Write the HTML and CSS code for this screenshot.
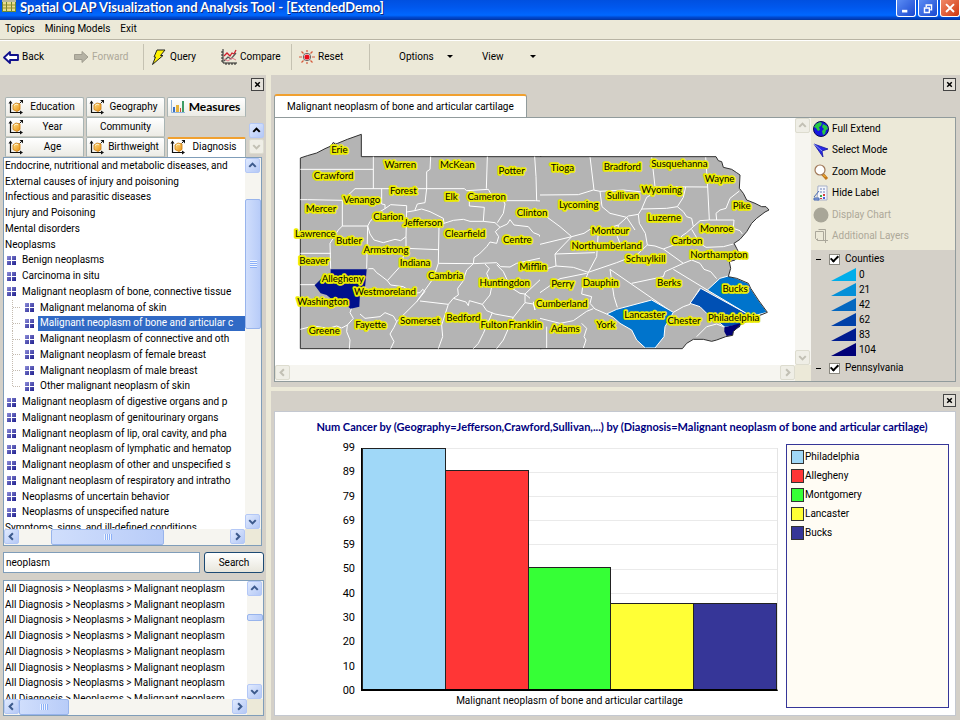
FILE: index.html
```html
<!DOCTYPE html>
<html lang="en">
<head>
<meta charset="utf-8">
<title>Spatial OLAP Visualization and Analysis Tool</title>
<link rel="stylesheet" href="styles.css">
</head>
<body>
<svg class="defs" width="0" height="0" aria-hidden="true">
  <defs>
    <linearGradient id="cubeFace" x1="0" y1="0" x2="1" y2="1"><stop offset="0" stop-color="#ffe08a"/><stop offset="1" stop-color="#e88f10"/></linearGradient>
    <symbol id="i-cube" viewBox="0 0 16 16">
      <path d="M2.500 3v10.500H13" fill="none" stroke="#111" stroke-width="1.200"/>
      <path d="M.5 4.500l2-3 2 3zM12 11.500l3 2-3 2zM11.500 1H15v3.500z" fill="#111"/>
      <path d="M11.500 4.500l2-2" stroke="#111"/>
      <path d="M5 6l3-2 4 1v5.500l-3 2-4-2z" fill="url(#cubeFace)" stroke="#c9780c" stroke-width=".8"/>
      <path d="M6 6.500l2-1.300 2 .6" fill="none" stroke="#fff3c8"/>
    </symbol>
    <symbol id="i-up" viewBox="0 0 14 14"><path d="M3.500 8.500L7 5l3.500 3.500" fill="none" stroke="currentColor" stroke-width="2.200"/></symbol>
    <symbol id="i-down" viewBox="0 0 14 14"><path d="M3.500 5.500L7 9l3.500-3.500" fill="none" stroke="currentColor" stroke-width="2.200"/></symbol>
    <symbol id="i-left" viewBox="0 0 14 14"><path d="M8.500 3.500L5 7l3.500 3.500" fill="none" stroke="currentColor" stroke-width="2.200"/></symbol>
    <symbol id="i-right" viewBox="0 0 14 14"><path d="M5.500 3.500L9 7l-3.500 3.500" fill="none" stroke="currentColor" stroke-width="2.200"/></symbol>
    <symbol id="i-x" viewBox="0 0 12 12"><path d="M3.500 3.500l5 5M8.500 3.500l-5 5" stroke="#000" stroke-width="1.600"/></symbol>
  </defs>
</svg>
<div class="app">
  <header class="titlebar">
    <svg class="app-icon" viewBox="0 0 14 14"><path d="M0 0h14v12H0z" fill="#6c8a34"/><path d="M1 2h3v9H1zM5 2h4v9H5zM10 2h3v9h-3z" fill="#e9dc8c"/><path d="M0 0h14v2H0z" fill="#b7b7a0"/><path d="M1 5h12M1 8h12" stroke="#9b8d2c"/></svg>
    <h1>Spatial OLAP Visualization and Analysis Tool - [ExtendedDemo]</h1>
    <div class="winbtns">
      <button type="button" aria-label="Minimize"><svg viewBox="0 0 17 17"><path d="M4 10h6v3H4z" fill="#fff"/></svg></button>
      <button type="button" aria-label="Restore"><svg viewBox="0 0 17 17"><path d="M6.500 7V4.500h6V10H11" fill="none" stroke="#fff" stroke-width="1.600"/><path d="M4.500 8h5.500v5H4.500z" fill="none" stroke="#fff" stroke-width="1.600"/></svg></button>
      <button type="button" class="close" aria-label="Close"><svg viewBox="0 0 17 17"><path d="M4 3.500l9 9M13 3.500l-9 9" stroke="#fff" stroke-width="2.200"/></svg></button>
    </div>
  </header>
  <nav class="menubar">
    <button type="button">Topics</button><button type="button">Mining Models</button><button type="button">Exit</button>
  </nav>
  <div class="toolbar">
    <button type="button"><svg viewBox="0 0 16 16"><path d="M1 8.500L7 3v3h8v5H7v3z" fill="#fff" stroke="#10108c" stroke-width="1.800" stroke-linejoin="round"/></svg>Back</button>
    <button type="button" disabled><svg viewBox="0 0 16 16"><path d="M15 8L9 2.500v3H1.500v5H9v3z" fill="#b5b2a4" stroke="#a09d90"/></svg>Forward</button>
    <span class="sep"></span>
    <button type="button"><svg viewBox="0 0 16 16"><path d="M6 1h8l-4.500 5.500h2.500L1.500 15.500 4.500 8H3z" fill="#fff200" stroke="#222" stroke-linejoin="round"/></svg>Query</button>
    <button type="button"><svg viewBox="0 0 16 16"><path d="M2 0v14h14M0 3h2M0 6h2M0 9h2M0 12h2M5 14v2M8 14v2M11 14v2M14 14v2" fill="none" stroke="#222"/><path d="M3 7l3-3 3 3 2-3 2 1 2-4" fill="none" stroke="#d11e2c" stroke-width="1.300"/><path d="M3 12l4-4 3 2 5-6" fill="none" stroke="#555" stroke-width="1.200"/><path d="M3 10l4 2 4-3 4 2" fill="none" stroke="#e4798a"/></svg>Compare</button>
    <span class="sep"></span>
    <button type="button" class="reset"><svg viewBox="0 0 16 16"><path d="M8 1v2M8 13v2M0 8h3M13 8h3M2.500 2.500l2 2M13.500 2.500l-2 2M2.500 13.500l2-2M13.500 13.500l-2-2" stroke="#d65a3c" stroke-width="1.200"/><circle cx="8" cy="8" r="3.700" fill="#fff" stroke="#444" stroke-width=".8"/><circle cx="8" cy="8" r="2.600" fill="#e8101c"/></svg>Reset</button>
    <span class="sep"></span>
    <button type="button" class="drop">Options<i></i></button>
    <button type="button" class="drop view">View<i></i></button>
  </div>

  <main>
    <section class="panel left">
      <div class="panel-head"><button type="button" class="x" aria-label="Close panel"><svg><use href="#i-x"/></svg></button></div>
      <div class="tabrow">
        <div class="tabs" role="tablist">
          <button type="button" role="tab"><svg><use href="#i-cube"/></svg><span>Education</span></button>
          <button type="button" role="tab"><svg><use href="#i-cube"/></svg><span>Geography</span></button>
          <button type="button" role="tab" class="bold"><svg viewBox="0 0 16 16"><path d="M1.500 1v12.500H15" fill="none" stroke="#8fb4dc"/><path d="M3 8h2v5H3z" fill="#3b6fc4"/><path d="M6 6h3v7H6z" fill="#e7b33a"/><path d="M10 9h1v4h-1z" fill="#d24a3a"/><path d="M12 2h2v11h-2z" fill="#3f9c66"/></svg><span>Measures</span></button>
          <button type="button" role="tab"><svg><use href="#i-cube"/></svg><span>Year</span></button>
          <button type="button" role="tab"><span>Community</span></button>
          <span></span>
          <button type="button" role="tab"><svg><use href="#i-cube"/></svg><span>Age</span></button>
          <button type="button" role="tab"><svg><use href="#i-cube"/></svg><span>Birthweight</span></button>
          <button type="button" role="tab" class="active" aria-selected="true"><svg><use href="#i-cube"/></svg><span>Diagnosis</span></button>
        </div>
        <div class="tabscroll">
          <button type="button" class="sb" aria-label="Previous tabs"><svg><use href="#i-up"/></svg></button>
          <button type="button" class="sb off" aria-label="Next tabs"><svg><use href="#i-down"/></svg></button>
        </div>
      </div>

      <div class="scrollbox tree">
        <div class="viewport">
          <ul class="rows" role="tree">
            <li>Endocrine, nutritional and metabolic diseases, and</li>
            <li>External causes of injury and poisoning</li>
            <li>Infectious and parasitic diseases</li>
            <li>Injury and Poisoning</li>
            <li>Mental disorders</li>
            <li>Neoplasms</li>
            <li class="l1">Benign neoplasms</li>
            <li class="l1">Carcinoma in situ</li>
            <li class="l1">Malignant neoplasm of bone, connective tissue</li>
            <li class="l2">Malignant melanoma of skin</li>
            <li class="l2 selected"><span>Malignant neoplasm of bone and articular c</span></li>
            <li class="l2">Malignant neoplasm of connective and oth</li>
            <li class="l2">Malignant neoplasm of female breast</li>
            <li class="l2">Malignant neoplasm of male breast</li>
            <li class="l2 last">Other malignant neoplasm of skin</li>
            <li class="l1">Malignant neoplasm of digestive organs and p</li>
            <li class="l1">Malignant neoplasm of genitourinary organs</li>
            <li class="l1">Malignant neoplasm of lip, oral cavity, and pha</li>
            <li class="l1">Malignant neoplasm of lymphatic and hematop</li>
            <li class="l1">Malignant neoplasm of other and unspecified s</li>
            <li class="l1">Malignant neoplasm of respiratory and intratho</li>
            <li class="l1">Neoplasms of uncertain behavior</li>
            <li class="l1">Neoplasms of unspecified nature</li>
            <li>Symptoms, signs, and ill-defined conditions</li>
          </ul>
        </div>
        <div class="vscroll"><button type="button" class="sb" aria-label="Scroll up"><svg><use href="#i-up"/></svg></button><div class="track"><div class="thumb"></div></div><button type="button" class="sb" aria-label="Scroll down"><svg><use href="#i-down"/></svg></button></div>
        <div class="hscroll"><button type="button" class="sb" aria-label="Scroll left"><svg><use href="#i-left"/></svg></button><div class="track"><div class="thumb"></div></div><button type="button" class="sb" aria-label="Scroll right"><svg><use href="#i-right"/></svg></button></div>
      </div>

      <form class="search" onsubmit="return false">
        <input type="text" value="neoplasm" aria-label="Search term">
        <button type="submit">Search</button>
      </form>

      <div class="scrollbox results">
        <div class="viewport">
          <ul class="rows">
            <li>All Diagnosis &gt; Neoplasms &gt; Malignant neoplasm</li>
            <li>All Diagnosis &gt; Neoplasms &gt; Malignant neoplasm</li>
            <li>All Diagnosis &gt; Neoplasms &gt; Malignant neoplasm</li>
            <li>All Diagnosis &gt; Neoplasms &gt; Malignant neoplasm</li>
            <li>All Diagnosis &gt; Neoplasms &gt; Malignant neoplasm</li>
            <li>All Diagnosis &gt; Neoplasms &gt; Malignant neoplasm</li>
            <li>All Diagnosis &gt; Neoplasms &gt; Malignant neoplasm</li>
            <li>All Diagnosis &gt; Neoplasms &gt; Malignant neoplasm</li>
          </ul>
        </div>
        <div class="vscroll"><button type="button" class="sb" aria-label="Scroll up"><svg><use href="#i-up"/></svg></button><div class="track"><div class="thumb"></div></div><button type="button" class="sb" aria-label="Scroll down"><svg><use href="#i-down"/></svg></button></div>
        <div class="hscroll"><button type="button" class="sb" aria-label="Scroll left"><svg><use href="#i-left"/></svg></button><div class="track"><div class="thumb"></div></div><button type="button" class="sb" aria-label="Scroll right"><svg><use href="#i-right"/></svg></button></div>
      </div>
    </section>

    <div class="right">
      <section class="panel mappanel">
        <div class="maphead">
          <button type="button" class="maptab" role="tab" aria-selected="true">Malignant neoplasm of bone and articular cartilage</button>
          <button type="button" class="x" aria-label="Close map"><svg><use href="#i-x"/></svg></button>
        </div>
        <div class="mapbody">
          <div class="scrollbox map">
            <div class="viewport">
              <svg class="pa" viewBox="0 0 1560 741" preserveAspectRatio="xMinYMin meet" role="img" aria-label="Pennsylvania counties">
                <g transform="translate(-15 -114)">
                  <path class="land" d="M91 234L112 227 140 219 165 206 183 198 190 187 203 190 232 178 274 163V230H814V806H91z"/>
                  <path class="edge" d="M814 230H274V163L232 178 203 190 196 193 190 187 183 198 165 206 140 219 112 227 91 234V806H814"/>
                  <path class="county" d="M91 268H310M310 230V326M482 230L480 268 470 275V326M652 230L649 326M794 230L798 290 800 362M255 326L583 326 590 332 655 328 663 342M91 359H112L217 361M217 361L235 345 255 326M217 361V438H293M217 438L205 450 180 490 182 566M91 520H182M293 438L290 566M91 614H134M335 326V372L345 374V386L362 374 410 377M470 326L465 368 442 372 434 392 410 396M345 386L318 402 300 425 293 438M410 377L408 470 392 482 375 478 340 488 312 480 300 462 293 438M434 392L455 387 480 395 520 415 522 430 507 434 505 550M408 470V505L505 509M522 430L550 421 580 418 600 424 640 424 643 382 598 378V330M640 424L675 428 690 442M663 342L700 362 705 372 700 400 682 428M700 362H797L840 365M505 550L610 551 612 533 628 522 650 500 660 486 680 490 686 470 676 455 690 442M408 505L390 560 352 602 330 585 320 578 310 566 295 566M352 602L362 615 400 620 430 640 450 638 458 628 465 634 440 665M505 550L490 595 440 665 380 725M450 663L535 673M610 551L590 570 578 605 563 625 565 645 550 655 535 673M535 673L515 735 518 770 505 806M270 702L285 715 330 710 345 698 370 708 380 725 372 742 360 762 372 785 362 806M91 748L130 738 175 745 200 738 215 744 232 735M245 684L240 698 250 715 232 735 230 755 240 780 238 806M550 655L588 666 595 677 598 662 637 673M637 673L660 645 665 620 650 580 658 566 645 552M610 551L680 548 692 560 720 561M680 554L700 575 722 622 750 640 765 642M690 442L712 432 720 419 732 435 775 440 790 458 808 465 820 491 840 491M720 561L740 550 840 528M637 673L650 692 675 702 730 712M667 698L640 760 625 790 610 806M730 712L700 780 680 806M730 712L765 668V642L820 590 840 578M765 668L790 672 795 690M780 655L765 642M795 690L790 665M812 725L830 740V806"/>
                  <path fill="#00108c" d="M182 568H290L288 592 285 622 270 638 268 680 242 686 228 675 205 662 188 660 170 645 152 640 134 616 160 590 182 580z"/>
                </g>
                <g transform="translate(795 -24)">
                  <path class="land" d="M0 140H528L535 152 545 155 550 172 575 178 590 188 600 195 598 235 610 250 620 270 645 280 665 290 678 290 687 300 675 306 650 325 635 340 620 365 600 388 582 400 590 415 600 435 585 450 568 455 572 475 565 500 590 505 625 520 632 535 655 570 682 607 650 620 600 645 580 665 578 676 557 680 530 690 515 694 490 688 460 688 440 700 427 716H0z"/>
                  <path class="county" d="M0 255L115 254 160 240 180 244 250 240 345 250M150 140L162 240M335 140L345 230 503 231M497 140L503 231 508 330M437 231L430 262 412 290 380 295 305 297M345 230L340 250 320 262 305 297M180 244L186 290 210 310 260 322M305 297L295 313 265 318 235 345 170 365 150 358 132 370 95 380 0 403M0 300L22 322 60 350 95 380M295 313L298 340 316 370 322 405 345 408 370 417M412 290L430 305 440 320 455 325 460 350 440 368 425 378 420 398 370 417M460 350L480 332 508 330M530 330L528 310 540 300 558 295 570 265 598 243M508 330L582 330 580 355 600 362 607 372M455 358L480 400 498 412 550 410 580 402M370 417L430 460M430 460L375 485 370 500 275 520M322 405L290 435 230 458 145 487M210 478L390 602M400 478L502 540M430 460L455 450 480 460 492 478 512 485 530 506M235 345L232 380 240 400M260 322L285 360M175 365L170 440 145 487M95 380L45 432 48 468 100 472 145 487M45 432L165 428M0 482L48 468M0 548L60 506 140 490M145 487L128 530 125 552 155 560 150 580 165 597 200 612M210 478L222 560 232 592M0 625L60 640 100 632 140 604 160 596M125 640L140 655 132 680 138 690 130 714M20 650V714M400 607L430 590 450 583M470 680L500 650 530 642 555 652M450 583L480 535"/>
                  <path class="seam" fill="#0074cc" d="M200 612L230 598 335 570 400 607 375 650 372 680 345 714H316L290 690 275 660 240 640 220 622z"/>
                  <path class="seam" fill="#0050b4" d="M482 535L632 617 600 645 555 652 530 632 500 610 480 590 450 580z"/>
                  <path class="seam" fill="#0074cc" d="M502 540L540 505 565 498 590 505 625 520 632 535 655 570 682 607 634 619z"/>
                  <path fill="#000078" d="M553 652L602 640 600 650 580 664 578 676 560 678 553 665z"/>
                  <path class="edge" d="M0 140H528L535 152 545 155 550 172 575 178 590 188 600 195 598 235 610 250 620 270 645 280 665 290 678 290 687 300 675 306 650 325 635 340 620 365 600 388 582 400 590 415 600 435 585 450 568 455 572 475 565 500 590 505 625 520 632 535 655 570 682 607 650 620 600 645 580 665 578 676 557 680 530 690 515 694 490 688 460 688 440 700 427 716H0"/>
                </g>
                <g class="names" transform="translate(-15 -114)">
                  <text x="208" y="218">Erie</text><text x="191" y="298">Crawford</text><text x="391" y="265">Warren</text><text x="562" y="265">McKean</text><text x="725" y="282">Potter</text>
                  <text x="400" y="341">Forest</text><text x="275" y="369">Venango</text><text x="544" y="361">Elk</text><text x="650" y="360">Cameron</text><text x="153" y="395">Mercer</text>
                  <text x="355" y="420">Clarion</text><text x="459" y="439">Jefferson</text><text x="786" y="409">Clinton</text><text x="136" y="472">Lawrence</text><text x="237" y="493">Butler</text>
                  <text x="585" y="471">Clearfield</text><text x="742" y="490">Centre</text><text x="348" y="519">Armstrong</text><text x="132" y="551">Beaver</text><text x="435" y="557">Indiana</text>
                  <text x="789" y="569">Mifflin</text><text x="218" y="605">Allegheny</text><text x="527" y="598">Cambria</text><text x="704" y="619">Huntingdon</text><text x="345" y="645">Westmoreland</text>
                  <text x="158" y="675">Washington</text><text x="163" y="761">Greene</text><text x="302" y="743">Fayette</text><text x="450" y="732">Somerset</text><text x="580" y="723">Bedford</text>
                  <text x="672" y="743">Fulton</text><text x="766" y="743">Franklin</text>
                </g>
                <g class="names" transform="translate(795 -24)">
                  <text x="67" y="184">Tioga</text><text x="247" y="181">Bradford</text><text x="418" y="172">Susquehanna</text><text x="539" y="217">Wayne</text><text x="365" y="249">Wyoming</text>
                  <text x="249" y="267">Sullivan</text><text x="116" y="294">Lycoming</text><text x="605" y="296">Pike</text><text x="373" y="334">Luzerne</text><text x="211" y="372">Montour</text>
                  <text x="530" y="367">Monroe</text><text x="441" y="402">Carbon</text><text x="200" y="417">Northumberland</text><text x="317" y="456">Schuylkill</text><text x="537" y="444">Northampton</text>
                  <text x="68" y="532">Perry</text><text x="182" y="529">Dauphin</text><text x="387" y="529">Berks</text><text x="585" y="547">Bucks</text><text x="65" y="590">Cumberland</text>
                  <text x="314" y="624">Lancaster</text><text x="432" y="641">Chester</text><text x="581" y="633">Philadelphia</text><text x="197" y="654">York</text><text x="76" y="665">Adams</text>
                </g>
              </svg>
            </div>
            <div class="vscroll"><button type="button" class="sb off" disabled aria-label="Scroll up"><svg><use href="#i-up"/></svg></button><div class="track"></div><button type="button" class="sb off" disabled aria-label="Scroll down"><svg><use href="#i-down"/></svg></button></div>
            <div class="hscroll"><button type="button" class="sb off" disabled aria-label="Scroll left"><svg><use href="#i-left"/></svg></button><div class="track"></div><button type="button" class="sb off" disabled aria-label="Scroll right"><svg><use href="#i-right"/></svg></button></div>
          </div>
          <aside>
            <div class="tools">
              <button type="button"><svg viewBox="0 0 16 16"><circle cx="8" cy="8" r="7.500" fill="#1616e0" stroke="#0a0a50"/><path d="M3 3l4-2 2 1-1 3-2 1 1 3-2 1-2-3-2-1zM10 3l4 2 1 3-2 1-1 4-2 1-1-4 2-2-2-2z" fill="#27c840"/></svg>Full Extend</button>
              <button type="button"><svg viewBox="0 0 16 16"><path d="M1 2l14 5-6 2 1 6z" fill="#2a2ae8" stroke="#1414a0" stroke-width=".8"/><path d="M1 2l8 7" stroke="#8c9cf0"/></svg>Select Mode</button>
              <button type="button"><svg viewBox="0 0 16 16"><path d="M9.500 10l4.500 5" stroke="#c47818" stroke-width="3"/><path d="M9.500 10l3 3" stroke="#f6c34c"/><circle cx="7" cy="6" r="5" fill="#fff" stroke="#a07858" stroke-width="1.200"/></svg>Zoom Mode</button>
              <button type="button"><svg viewBox="0 0 16 16"><path d="M5 1h9v14H4z" fill="#f4f6fb" stroke="#a7b0c8"/><path d="M7 4h5M7 7h5" stroke="#6a80b8" stroke-dasharray="2 1"/><path d="M1 12l5-6M1 13h5v2H1z" stroke="#496ab4" fill="#8ca4dc"/><path d="M7 10h2v2H7z" fill="#3ba64a"/><path d="M10 9h2v2h-2zM7 13h2v1H7z" fill="#d84040"/><path d="M10 12h2v2h-2z" fill="#4c62d4"/></svg>Hide Label</button>
              <button type="button" disabled><svg viewBox="0 0 16 16"><circle cx="8" cy="8" r="7.500" fill="#a8a698"/></svg>Display Chart</button>
              <button type="button" disabled><svg viewBox="0 0 16 16"><path d="M5.500 1.500h7v10M2.500 3.500h8v9h-6l-2-2zM4.500 10.500v2" fill="none" stroke="#aaa79a"/><path d="M12.500 9v6M10 12.500h5" stroke="#aaa79a"/></svg>Additional Layers</button>
            </div>
            <div class="layers">
              <label><i class="fold"></i><input type="checkbox" checked>Counties</label>
              <ul class="ramp">
                <li class="r0">0</li><li class="r1">21</li><li class="r2">42</li><li class="r3">62</li><li class="r4">83</li><li class="r5">104</li>
              </ul>
              <label><i class="fold"></i><input type="checkbox" checked>Pennsylvania</label>
            </div>
          </aside>
        </div>
      </section>

      <section class="panel chartpanel">
        <div class="panel-head"><button type="button" class="x" aria-label="Close chart"><svg><use href="#i-x"/></svg></button></div>
        <div class="chart">
          <h2>Num Cancer by (Geography=Jefferson,Crawford,Sullivan,...) by (Diagnosis=Malignant neoplasm of bone and articular cartilage)</h2>
          <div class="chartrow">
            <div class="plotarea">
              <ol class="ticks"><li>99</li><li>89</li><li>79</li><li>69</li><li>59</li><li>50</li><li>40</li><li>30</li><li>20</li><li>10</li><li>00</li></ol>
              <div class="plot">
                <div class="bar b1" style="height:100%"></div>
                <div class="bar b2" style="height:91%"></div>
                <div class="bar b3" style="height:50.6%"></div>
                <div class="bar b4" style="height:35.6%"></div>
                <div class="bar b5" style="height:35.6%"></div>
              </div>
              <p>Malignant neoplasm of bone and articular cartilage</p>
            </div>
            <ul class="legend">
              <li><i class="b1"></i>Philadelphia</li><li><i class="b2"></i>Allegheny</li><li><i class="b3"></i>Montgomery</li><li><i class="b4"></i>Lancaster</li><li><i class="b5"></i>Bucks</li>
            </ul>
          </div>
        </div>
      </section>
    </div>
  </main>
</div>
</body>
</html>
```
FILE: styles.css
```css
:root {
  --face: #ece9d8;
  --panel: #d4d0c8;
  --field: #7f9db9;
  --ui: Roboto, "Liberation Sans", sans-serif;
  --bold: Lato, "Liberation Sans", sans-serif;
}
* { box-sizing: border-box; }
body { margin: 0; background: var(--face); color: #000; font: 10px/14px var(--ui); }
ul, ol { list-style: none; margin: 0; padding: 0; }
h1, h2, p { margin: 0; }
button { font: inherit; color: inherit; background: none; border: 0; padding: 0; margin: 0; white-space: nowrap; }
button:disabled { color: #aca899; }
svg { display: block; flex: none; }
.defs { position: absolute; }
.app { height: 100vh; display: flex; flex-direction: column; overflow: hidden; }

/* title bar and menus */
.titlebar { flex: none; height: 20px; display: flex; align-items: flex-start; gap: 4px; padding: 0 0 0 2px; overflow: hidden;
  background: linear-gradient(#0050e0, #0058ee 40%, #0068ff 80%, #0040c0 95%); border-bottom: 1px solid #0038a8; }
.app-icon { width: 14px; height: 14px; }
h1 { flex: 1; color: #fff; font: bold 13px/15px var(--bold); white-space: nowrap; text-shadow: 1px 1px 0 #0a2a80; }
.winbtns { display: flex; gap: 2px; }
.winbtns button { width: 20px; height: 17px; border: 1px solid #fff; border-top: 0; border-radius: 0 0 3px 3px; background: linear-gradient(135deg, #5a8cf4, #1a48d0); }
.winbtns .close { background: linear-gradient(135deg, #f08868, #d03810); }
.winbtns svg { width: 18px; height: 15px; }
.menubar { flex: none; height: 20px; display: flex; align-items: center; gap: 10px; padding: 0 5px 1px; border-bottom: 1px solid #b8b4a4; }
.toolbar { flex: none; height: 35px; display: flex; align-items: center; padding: 0 3px 3px; border-top: 1px solid #fff; }
.toolbar button { width: 70px; display: flex; align-items: center; gap: 3px; }
.toolbar svg { width: 16px; height: 16px; }
.sep { width: 1px; height: 26px; background: #c5c2b2; margin-right: 7px; }
.toolbar .drop { width: 54px; justify-content: space-between; margin-left: 22px; }
.toolbar .view { margin-left: 29px; }
.drop i { border: 3px solid transparent; border-top-color: #000; border-bottom: 0; }

/* panels */
main { flex: 1; min-height: 0; display: grid; grid-template-columns: 266px minmax(0, 1fr); column-gap: 5px; }
.panel { background: var(--panel); display: flex; flex-direction: column; min-width: 0; }
.panel-head { flex: none; height: 20px; display: flex; justify-content: flex-end; padding: 3px 3px 0; }
.x { width: 13px; height: 13px; border: 1px solid #444; background: #e4e1da; flex: none; }
.x svg { width: 11px; height: 11px; }
.left { padding: 0 2px 4px 3px; min-height: 0; }
.left .panel-head { padding-right: 0; }
.tabrow { flex: none; display: flex; justify-content: space-between; align-items: flex-end; padding: 2px 0 0 2px; }
.tabs { display: grid; grid-template-columns: repeat(3, 79px); grid-auto-rows: 20px; column-gap: 2px; }
.tabs button { display: flex; align-items: center; padding: 0 2px; border: 1px solid #a8b4b4; border-bottom-color: #c9c9bf; border-radius: 2px 2px 0 0; background: linear-gradient(#fff, #ecebe5); }
.tabs svg { width: 16px; height: 16px; }
.tabs span { flex: 1; text-align: center; }
.tabs .bold { font: bold 12px/14px var(--bold); }
.tabs .active { background: #fff; border-top: 2px solid #f0a030; border-bottom: 0; padding-bottom: 2px; }
.tabscroll { display: grid; gap: 1px; padding-bottom: 3px; }

.scrollbox { display: grid; grid-template: minmax(0, 1fr) 16px / minmax(0, 1fr) 16px; background: #fff; border: 1px solid var(--field); }
.viewport { overflow: hidden; min-width: 0; }
.vscroll, .hscroll { display: flex; background: #f6f5f0; min-width: 0; min-height: 0; }
.vscroll { flex-direction: column; }
.scrollbox::after { content: ""; background: var(--face); }
.track { flex: 1; display: flex; min-height: 0; min-width: 0; }
.vscroll .track { flex-direction: column; }
.thumb { border: 1px solid #98b4ec; border-radius: 2px; background: linear-gradient(90deg, #d0defc, #b8ccf8); display: grid; place-content: center; }
.hscroll .thumb::after { content: ""; width: 8px; height: 6px; background: repeating-linear-gradient(90deg, #eef4fe 0 1px, #8cb0f8 1px 2px); }
.tree .vscroll .thumb::after { content: ""; width: 7px; height: 8px; background: repeating-linear-gradient(#eef4fe 0 1px, #8cb0f8 1px 2px); }
.sb { flex: none; width: 15px; height: 15px; border: 1px solid #b4c8f6; border-radius: 2px; background: linear-gradient(135deg, #e0eafe, #b4c8f6); color: #3c5a8c; }
.sb svg { width: 13px; height: 13px; }
.tabscroll .sb:first-child { color: #000; }
.sb.off { background: #efeee6; border-color: #dddccf; color: #c2c0b4; }

.tree { flex: 1; min-height: 0; width: 259px; }
.tree .vscroll .track { padding-top: 26px; }
.tree .vscroll .thumb { height: 130px; }
.tree .hscroll .track { padding-left: 32px; }
.tree .hscroll .thumb { width: 113px; }
.rows { display: grid; grid-auto-rows: 1fr; align-items: center; white-space: nowrap; padding-left: 1px; }
.tree .rows { height: 378px; }
.results .rows { height: 126px; }
.results { flex: none; height: 136px; }
.results .vscroll .track { padding-top: 18px; }
.results .vscroll .thumb { height: 7px; }
.results .hscroll .thumb { width: 50px; }
.l1, .l2 { display: flex; align-items: center; height: 100%; }
.l1::before, .l2::before { content: ""; flex: none; width: 9px; height: 9px; margin: 0 6px 0 2px;
  background: linear-gradient(#fff, #fff) center / 1px 100% no-repeat, linear-gradient(#fff, #fff) center / 100% 1px no-repeat, linear-gradient(135deg, #8c8cd8, #202090); }
.l2 { padding-left: 18px; background: repeating-linear-gradient(#c4bbb0 0 1px, #fff 1px 2px) 7px 0 / 1px 100% no-repeat, repeating-linear-gradient(90deg, #c4bbb0 0 1px, #fff 1px 2px) 8px 50% / 8px 1px no-repeat; }
.l2.last { background-size: 1px 50%, 8px 1px; }
.selected::before { margin-right: 4px; }
.selected span { flex: 1; align-self: stretch; padding-left: 2px; background: #316ac5; color: #fff; }

.search { flex: none; display: flex; gap: 4px; margin: 6px 0 7px; }
.search input { flex: 1; min-width: 0; height: 21px; border: 1px solid var(--field); padding: 0 2px; font: inherit; background: #fff; }
.search button { width: 60px; height: 21px; border: 1px solid #1c4a74; border-radius: 3px; background: linear-gradient(#fff, #e8e6dc); }

/* map */
.right { display: flex; flex-direction: column; gap: 4px; min-width: 0; min-height: 0; }
.mappanel { flex: none; padding: 0 4px 5px 3px; }
.maphead { display: flex; justify-content: space-between; align-items: flex-start; height: 42px; padding-top: 3px; }
.maptab { align-self: flex-end; height: 23px; padding: 0 12px; background: #fff; border: 1px solid #919b9c; border-top: 2px solid #f0a030; border-bottom: 0; border-radius: 3px 3px 0 0; }
.mapbody { display: flex; border: 1px solid #919b9c; }
.map { flex: 1; min-width: 0; border: 0; }
.pa { width: 100%; height: 247px; }
.land { fill: #b4b4b4; }
.edge { fill: none; stroke: #303030; stroke-width: 3; }
.county, .seam { stroke: #fff; stroke-width: 3; }
.county { fill: none; }
.names text { font: 29px var(--bold); text-anchor: middle; fill: #000; stroke: #ebeb00; stroke-width: 11; stroke-linejoin: round; paint-order: stroke; }
aside { flex: none; width: 144px; display: flex; flex-direction: column; background: var(--panel); }
.tools { height: 132px; display: grid; grid-auto-rows: 1fr; background: var(--face); padding: 0 2px 3px; }
.tools button { display: flex; align-items: center; gap: 3px; }
.tools svg { width: 16px; height: 16px; }
.layers { padding: 1px 5px; }
.layers label { display: flex; align-items: center; height: 16px; gap: 5px; }
.fold { width: 5px; height: 1px; background: #000; margin-right: 3px; }
.layers input { appearance: none; width: 11px; height: 11px; margin: 0; border: 1px solid #8a8880; background: #fff; display: grid; place-items: center; }
.layers input::after { content: ""; width: 3px; height: 6px; border: solid #000; border-width: 0 2px 2px 0; transform: translateY(-1px) rotate(45deg); }
.ramp { height: 90px; display: grid; grid-auto-rows: 1fr; padding-left: 15px; margin: 0 0 3px; }
.ramp li { display: flex; align-items: center; gap: 3px; }
.ramp li::before { content: ""; width: 25px; height: 13px; clip-path: polygon(0 100%, 100% 0, 100% 100%); background: var(--c); }
.r0 { --c: #00aeea; } .r1 { --c: #0490d8; } .r2 { --c: #0468c0; } .r3 { --c: #0040a8; } .r4 { --c: #001c90; } .r5 { --c: #000078; }

/* chart */
.chartpanel { flex: 1; min-height: 0; padding: 0 4px 4px 3px; }
.chartpanel .panel-head { padding-right: 0; }
.chart { flex: 1; min-height: 0; display: flex; flex-direction: column; background: #fff; border: 1px solid #c4c8d0; }
h2 { color: #000080; font: bold 11px/14px var(--bold); text-align: center; white-space: nowrap; padding: 8px 0 10px 14px; }
.chartrow { flex: 1; min-height: 0; display: flex; padding: 0 6px 7px; }
.plotarea { flex: 1; min-width: 0; display: grid; grid-template: minmax(0, 1fr) 17px / 80px minmax(0, 1fr); padding-top: 4px; }
.ticks { display: flex; flex-direction: column; justify-content: space-between; text-align: right; padding-right: 6px; margin: -7px 0; font-size: 11px; }
.plot { display: flex; align-items: flex-end; border-left: 1px solid #000; border-bottom: 2px solid #000; border-right: 1px solid #e4e4e4;
  background: repeating-linear-gradient(#eaeaea 0 1px, transparent 1px 10%); }
.bar { flex: 1; border: 1px solid #222; border-bottom: 0; }
.bar + .bar { border-left: 0; }
.b1 { background: #a0d8f8; } .b2 { background: #ff3636; } .b3 { background: #36ff36; } .b4 { background: #ffff36; } .b5 { background: #363698; }
.plotarea p { grid-column: 2; text-align: center; padding-top: 3px; }
.legend { width: 163px; margin-left: 8px; border: 1px solid #363698; background: #fffcf4; padding: 2px 4px; line-height: 19px; }
.legend li { display: flex; align-items: center; gap: 1px; }
.legend i { width: 13px; height: 14px; border: 1px solid #333; }
```
